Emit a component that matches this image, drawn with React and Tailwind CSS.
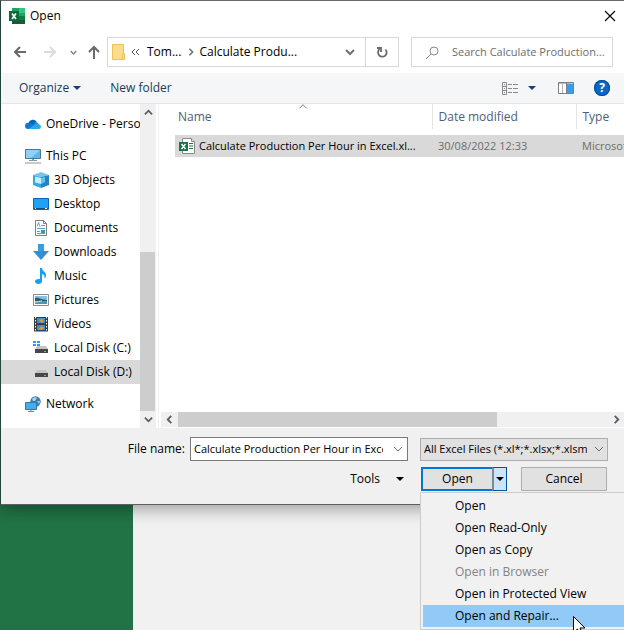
import React, { useState } from 'react';

const ExcelAppIcon = () => (
  <svg width="16" height="16" viewBox="0 0 16 16" className="shrink-0">
    <path d="M3 0h13v16H3z" fill="#21a366" />
    <path d="M10 0h6v5h-6z" fill="#33c481" />
    <path d="M3 5h7v5H3z" fill="#107c41" />
    <path d="M3 11h13v5H3z" fill="#185c37" />
    <path d="M10 8h6v4h-6z" fill="#107c41" />
    <path d="M0 3h10v10H0z" fill="#0b6a3c" />
    <path d="M3 5.5l4 5.5M7 5.5L3 11" stroke="#fff" strokeWidth="1.6" />
  </svg>
);

const ExcelFileIcon = () => (
  <svg width="16" height="16" viewBox="0 0 16 16" className="shrink-0">
    <path d="M3.5.5h9l3 3v12h-12z" fill="#fff" stroke="#8a8a8a" />
    <path d="M12.5.5v3h3" fill="#e8e8e8" stroke="#8a8a8a" />
    <path d="M10 5.500h4M10 8h4M10 10.500h4" stroke="#1e7145" />
    <path d="M0 4h9v9H0z" fill="#1e7145" />
    <path d="M2.500 6l4 5M6.500 6l-4 5" stroke="#fff" strokeWidth="1.400" />
  </svg>
);

const OneDriveIcon = () => (
  <svg width="16" height="16" viewBox="0 0 16 16">
    <path d="M3.500 7a4.500 4.500 0 0 1 8.300-1l-3 4z" fill="#0364b8" />
    <path d="M9 6.500a3.600 3.600 0 0 1 5 2.200l-4 3z" fill="#1490df" />
    <path d="M3 13a3 3 0 0 1 .300-6.200c1.400-.300 2.700 0 3.700.700L14 12z" fill="#0f78d4" />
    <path d="M3 13l7-4.500c3-1.500 6 .300 6 2.300A2.300 2.300 0 0 1 13.700 13z" fill="#28a8ea" />
  </svg>
);

const ThisPcIcon = () => (
  <svg width="16" height="16" viewBox="0 0 16 16">
    <path d="M.500 1.500h15v9H.500z" fill="#5cb8f0" stroke="#4a7796" />
    <path d="M1 2h14L6 10H1z" fill="#8fd0f7" />
    <path d="M7 11h2v1H7z" fill="#8a979e" />
    <path d="M4 12.500h8M0 15h16" stroke="#8a979e" />
  </svg>
);

const ObjectsIcon = () => (
  <svg width="16" height="16" viewBox="0 0 16 16">
    <path d="M0 3l8-3 8 3-8 2z" fill="#7cc4e6" />
    <path d="M0 3l8 2v11l-8-3z" fill="#35a8e0" />
    <path d="M16 3L8 5v11l8-3z" fill="#2384c4" />
    <path d="M2 4.500l6 1.500v6l-6-1.500z" fill="#c4edfb" />
    <path d="M8 6l4-1v5l-4 2z" fill="#65c3ea" />
  </svg>
);

const DesktopIcon = () => (
  <svg width="16" height="16" viewBox="0 0 16 16">
    <path d="M.500 2.500h15v11H.500z" fill="#1ea2f8" stroke="#0c66ad" />
    <path d="M1 12.500h14" stroke="#0c4f88" />
    <path d="M2 12.500h1M12 12.500h2" stroke="#fff" />
  </svg>
);

const DocumentsIcon = () => (
  <svg width="16" height="16" viewBox="0 0 16 16">
    <path d="M2.500.500h8l3 3v12h-11z" fill="#fff" stroke="#7f7f7f" />
    <path d="M10.500.500v3h3" fill="none" stroke="#7f7f7f" />
    <path d="M4 6.500l1.500-4L7 6.500M8 5.500h4M4 8.500h8M4 13.500h8M4 11.500h3" fill="none" stroke="#58a3ce" />
    <path d="M8 10h4v3H8z" fill="#3b97a8" />
  </svg>
);

const DownloadsIcon = () => (
  <svg width="16" height="16" viewBox="0 0 16 16">
    <path d="M5 0h6v7h5l-8 9-8-9h5z" fill="#2f8fdc" />
    <path d="M5 0h6v7H5z" fill="#3a9ae3" />
  </svg>
);

const MusicIcon = () => (
  <svg width="16" height="16" viewBox="0 0 16 16">
    <path d="M7 0h2c0 3 4 4 4 7 0 1.500-.500 3-1.500 3.500C12 8 11 6.500 9 6v7c0 2-1.500 3-3.500 3S2 15 2 13.500 3.500 11 5.500 11H7z" fill="#1d9df2" />
  </svg>
);

const PicturesIcon = () => (
  <svg width="16" height="16" viewBox="0 0 16 16">
    <path d="M.500 2.500h15v11H.500z" fill="#fff" stroke="#8d8d8d" />
    <path d="M2 4h12v8H2z" fill="#7cc3ec" />
    <path d="M2 6c4-1 6 2 12 2v1H2z" fill="#2d5d5b" />
    <path d="M2 9h12v3H2z" fill="#4c94b6" />
    <path d="M2 10c3 0 4-1 7-1" stroke="#d8eef8" fill="none" />
  </svg>
);

const VideosIcon = () => (
  <svg width="16" height="16" viewBox="0 0 16 16">
    <path d="M1 1h14v14.500H1z" fill="#3a3a3a" />
    <path d="M2.500 1v15M13.500 1v15" stroke="#fff" strokeDasharray="1.500 1.500" />
    <path d="M4 2h8v6H4zM4 9h8v6H4z" fill="#3e91cf" />
    <path d="M6 4l3-1 2 2-2 2zM5 13l4-3 2 2-2 2z" fill="#d49a3c" />
    <path d="M4 7h8v1H4zM4 14h8v1H4z" fill="#1d4b80" />
  </svg>
);

const DiskIcon = ({ system }) => (
  <svg width="16" height="16" viewBox="0 0 16 16">
    <path d="M4 6h9l2 3H2z" fill="#c4c4c4" />
    <path d="M2 9h13v4H2z" fill="#474747" />
    <path d="M11 11h2v1h-2z" fill="#3fd67a" />
    {system && <path d="M0 1h3v2H0zM4 1h3v2H4zM0 4h3v2H0zM4 4h3v2H4z" fill="#1ea2f8" />}
  </svg>
);

const NetworkIcon = () => (
  <svg width="16" height="16" viewBox="0 0 16 16">
    <circle cx="10.500" cy="5.500" r="5.200" fill="#3c7fae" />
    <path d="M7 3c2-2 4-2 5-1l-2 3H8zM12 5l3 0-1 3z" fill="#a6d3ec" />
    <path d="M.500 6.500h11v7H.500z" fill="#45aeea" stroke="#2f78a8" />
    <path d="M3 15.500h6M6 14v1" stroke="#70899a" />
  </svg>
);

const Chevron = ({ dir = 'down', size = 10, color = '#5d5a66', width = 2 }) => {
  const paths = {
    down: 'M1 3l4 4 4-4',
    up: 'M1 7l4-4 4 4',
    left: 'M7 1L3 5l4 4',
    right: 'M3 1l4 4-4 4',
  };
  return (
    <svg width={size} height={size} viewBox="0 0 10 10" className="shrink-0" fill="none">
      <path d={paths[dir]} stroke={color} strokeWidth={width} />
    </svg>
  );
};

const Caret = ({ color = '#000' }) => (
  <svg width="8" height="4" viewBox="0 0 8 4" className="shrink-0">
    <path d="M0 0h8L4 4z" fill={color} />
  </svg>
);

const places = [
  { name: 'OneDrive - Personal', icon: <OneDriveIcon />, root: true },
  { name: 'This PC', icon: <ThisPcIcon />, root: true },
  { name: '3D Objects', icon: <ObjectsIcon /> },
  { name: 'Desktop', icon: <DesktopIcon /> },
  { name: 'Documents', icon: <DocumentsIcon /> },
  { name: 'Downloads', icon: <DownloadsIcon /> },
  { name: 'Music', icon: <MusicIcon /> },
  { name: 'Pictures', icon: <PicturesIcon /> },
  { name: 'Videos', icon: <VideosIcon /> },
  { name: 'Local Disk (C:)', icon: <DiskIcon system /> },
  { name: 'Local Disk (D:)', icon: <DiskIcon /> },
  { name: 'Network', icon: <NetworkIcon />, root: true },
];

const menuItems = [
  { name: 'Open' },
  { name: 'Open Read-Only' },
  { name: 'Open as Copy' },
  { name: 'Open in Browser', disabled: true },
  { name: 'Open in Protected View' },
  { name: 'Open and Repair...' },
];

const TitleBar = () => (
  <header className="flex h-[30px] items-center pl-2 pr-1">
    <ExcelAppIcon />
    <h1 className="ml-[5px] flex-1">Open</h1>
    <button type="button" aria-label="Close" className="flex h-5 w-5 items-center justify-center">
      <svg width="12" height="12" viewBox="0 0 12 12" stroke="#000" strokeWidth="1.100">
        <path d="M1 1l10 10M11 1L1 11" />
      </svg>
    </button>
  </header>
);

const NavBar = () => (
  <nav className="flex h-[42px] items-center pl-[13px] pr-[11px]">
    <button type="button" aria-label="Back">
      <svg width="12" height="12" viewBox="0 0 12 12" fill="none" stroke="#6a6a6a" strokeWidth="2">
        <path d="M12 6H1M6 1L1 6l5 5" />
      </svg>
    </button>
    <button type="button" aria-label="Forward" disabled className="ml-[18px]">
      <svg width="12" height="12" viewBox="0 0 12 12" fill="none" stroke="#dcdcdc" strokeWidth="2">
        <path d="M0 6h11M6 1l5 5-5 5" />
      </svg>
    </button>
    <button type="button" aria-label="Recent locations" className="ml-[14px]">
      <Chevron size={7} color="#808080" width={2} />
    </button>
    <button type="button" aria-label="Up" className="ml-[11px]">
      <svg width="12" height="14" viewBox="0 0 12 14" fill="none" stroke="#6a6a6a" strokeWidth="2">
        <path d="M6 14V2M1 7l5-5 5 5" />
      </svg>
    </button>

    {/* Address bar */}
    <div className="ml-[7px] flex h-[30px] min-w-0 flex-1 items-center border border-[#d9d9d9] pl-1">
      <svg width="14" height="16" viewBox="0 0 14 16" className="shrink-0">
        <path d="M.500.500h11v15H.500z" fill="#fbdc8d" stroke="#eac25a" />
        <path d="M10.500 9.500h2v6h-2z" fill="#fbdc8d" stroke="#eac25a" />
      </svg>
      <svg width="9" height="8" viewBox="0 0 9 8" className="ml-[5px] shrink-0" fill="none" stroke="#555">
        <path d="M4 1L1 4l3 3M8 1L5 4l3 3" />
      </svg>
      <a href="#tom" className="ml-[7px] whitespace-nowrap">Tom...</a>
      <span className="ml-[6px]"><Chevron dir="right" size={8} color="#707070" /></span>
      <a href="#folder" className="ml-1 flex-1 truncate">Calculate Produ...</a>
      <button type="button" aria-label="Previous locations" className="px-[10px]">
        <Chevron color="#707070" />
      </button>
      <button
        type="button"
        aria-label="Refresh"
        className="flex h-full w-[33px] items-center justify-center border-l border-[#d9d9d9]"
      >
        <svg width="12" height="12" viewBox="0 0 12 12" fill="none" stroke="#6a6a6a" strokeWidth="1.800">
          <path d="M9.500 3.500a4.300 4.300 0 1 1-6 -.300M1 2h4v4" />
        </svg>
      </button>
    </div>

    {/* Search */}
    <label className="ml-3 flex h-[30px] w-[202px] items-center border border-[#d9d9d9] pl-[14px]">
      <svg width="13" height="13" viewBox="0 0 13 13" className="shrink-0" fill="none" stroke="#8a8a8a">
        <circle cx="8" cy="5" r="4" />
        <path d="M5 8l-5 5" />
      </svg>
      <input
        type="text"
        aria-label="Search"
        placeholder="Search Calculate Production..."
        className="ml-[13px] min-w-0 flex-1 text-[11px] outline-none placeholder:text-[#6d6d6d]"
      />
    </label>
  </nav>
);

const Toolbar = () => (
  <div className="flex h-[31px] items-center border-b border-[#e4e6e8] bg-[#f5f6f7] pl-[18px] pr-[14px] text-[#1e395b]">
    <button type="button" className="flex items-center gap-1">
      Organize <Caret color="#1e3a78" />
    </button>
    <button type="button" className="ml-[29px]">New folder</button>
    <button type="button" aria-label="Change your view" className="ml-auto flex items-center gap-[10px]">
      <svg width="16" height="13" viewBox="0 0 16 13" fill="none" stroke="#8a8a8a">
        <path d="M.500.500h4v12h-4zM.500 4.500h4M.500 8.500h4M2 2.500h1M2 6.500h1M2 10.500h1" />
        <path d="M6 2.500h4M11 2.500h5M6 6.500h4M11 6.500h5M6 10.500h4M11 10.500h5" />
      </svg>
      <Caret color="#1e3a78" />
    </button>
    <button type="button" aria-label="Show the preview pane" className="ml-[22px]">
      <svg width="16" height="12" viewBox="0 0 16 12">
        <path d="M.500.500h15v11H.500z" fill="#fff" stroke="#7f7f7f" />
        <path d="M1 1h14" stroke="#7f7f7f" />
        <path d="M4.500 1v10" stroke="#b5b5b5" />
        <path d="M9 2h6v9H9z" fill="#3c9be8" />
        <path d="M8.500 1v10" stroke="#7f7f7f" />
      </svg>
    </button>
    <button
      type="button"
      aria-label="Help"
      className="ml-5 flex h-4 w-4 items-center justify-center rounded-full bg-[#0a66c8] font-bold text-white ring-1 ring-[#084a94] ring-inset"
    >
      ?
    </button>
  </div>
);

const Sidebar = ({ current, onSelect }) => (
  <aside className="flex w-[158px] shrink-0 border-r border-[#f0f0f0]">
    <ul className="min-w-0 flex-1 overflow-hidden pb-3 pt-2">
      {places.map((place) => (
        <li key={place.name} className={place.name === 'OneDrive - Personal' ? 'mb-2' : place.name === 'Network' ? 'mt-2' : ''}>
          <button
            type="button"
            onClick={() => onSelect(place.name)}
            className={`flex h-6 w-full items-center gap-[5px] overflow-hidden whitespace-nowrap ${
              place.root ? 'pl-6' : 'pl-8'
            } ${place.name === current ? 'bg-[#d9d9d9]' : ''}`}
          >
            <span className="shrink-0">{place.icon}</span>
            {place.name}
          </button>
        </li>
      ))}
    </ul>
    <div className="mr-[2px] flex w-4 flex-col bg-[#f0f0f0]">
      <div className="flex h-[17px] items-center justify-center"><Chevron dir="up" size={9} /></div>
      <div className="flex-1" />
      <div className="h-[159px] w-[15px] bg-[#cdcdcd]" />
      <div className="flex h-[17px] items-center justify-center"><Chevron size={9} /></div>
    </div>
  </aside>
);

const FileList = () => (
  <section className="flex min-w-0 flex-1 flex-col pl-[2px]">
    <table className="ml-[14px] w-[calc(100%-14px)] table-fixed border-collapse text-left">
      <thead>
        <tr className="h-[25px] text-[#4c607a]">
          <th className="relative border-r border-[#e5e5e5] pl-[3px] font-normal">
            Name
            <span className="absolute -top-[2px] left-1/2 -translate-x-1/2"><Chevron dir="up" size={9} color="#707070" width={1} /></span>
          </th>
          <th className="w-36 border-r border-[#e5e5e5] pl-[6px] font-normal">Date modified</th>
          <th className="w-12 pl-[6px] font-normal">Type</th>
        </tr>
      </thead>
      <tbody>
        <tr className="h-[6px]" />
        <tr className="h-[22px] bg-[#d9d9d9] text-[11px] text-[#6d6d6d]">
          <td className="pl-1 text-black">
            <span className="flex items-center gap-1 whitespace-nowrap">
              <ExcelFileIcon /> Calculate Production Per Hour in Excel.xl...
            </span>
          </td>
          <td className="pl-[6px]">30/08/2022 12:33</td>
          <td className="overflow-hidden whitespace-nowrap pl-[6px]">Microsoft Excel Worksheet</td>
        </tr>
      </tbody>
    </table>
    <div className="mt-auto mb-px flex h-[15px] items-center bg-[#f0f0f0]">
      <div className="flex w-[17px] justify-center"><Chevron dir="left" size={9} /></div>
      <div className="h-full w-[319px] bg-[#cdcdcd]" />
      <div className="flex flex-1 justify-end pr-[3px]"><Chevron dir="right" size={9} /></div>
    </div>
  </section>
);

const OpenMenu = () => (
  <div
    role="menu"
    className="absolute top-[25px] left-[-1px] z-10 w-[210px] border border-[#cccccc] bg-[#f1f1f1] py-[2px] pl-[2px]"
  >
    {menuItems.map((item, index) => (
      <button
        key={item.name}
        type="button"
        role="menuitem"
        disabled={item.disabled}
        className={`block h-[22px] w-full pl-8 text-left ${item.disabled ? 'text-[#838383]' : ''} ${
          index === menuItems.length - 1 ? 'bg-[#91c9f7]' : ''
        }`}
      >
        {item.name}
      </button>
    ))}
    <svg width="13" height="20" viewBox="0 0 13 20" className="absolute top-[123px] left-[152px]">
      <path d="M.500.500v16l4-3.500 2.500 6 2.500-1-2.500-6h5z" fill="#fff" stroke="#000" />
    </svg>
  </div>
);

const Footer = () => {
  const [fileName, setFileName] = useState('Calculate Production Per Hour in Excel.xlsx');

  return (
    <footer className="bg-[#f0f0f0] pt-[9px] pr-4 pb-[13px]">
      <div className="flex items-center">
        <label htmlFor="file-name" className="w-[184px] text-right">File name:</label>
        <div className="ml-[5px] flex h-6 min-w-0 flex-1 items-center border border-[#7a7a7a] bg-white pr-1 pl-[3px]">
          <input
            id="file-name"
            type="text"
            value={fileName}
            onChange={(e) => setFileName(e.target.value)}
            className="mr-[10px] min-w-0 flex-1 text-[11px] outline-none"
          />
          <Chevron color="#6a6a6a" width={1} />
        </div>
        <div className="relative ml-3 flex h-6 w-[188px] items-center">
          <select
            aria-label="File type"
            className="h-[23px] w-full appearance-none border border-[#adadad] bg-[#e1e1e1] pr-[20px] pl-[3px] text-[11px] outline-none"
          >
            <option>All Excel Files (*.xl*;*.xlsx;*.xlsm;*.xlsb)</option>
          </select>
          <span className="pointer-events-none absolute right-1"><Chevron color="#6a6a6a" width={1} /></span>
        </div>
      </div>

      <div className="mt-[6px] flex h-6 items-center justify-end pr-px">
        <button type="button" className="mr-[17px] flex items-center gap-4">
          Tools <Caret />
        </button>
        <div className="relative flex h-6 w-[86px]">
          <button type="button" className="flex-1 border-2 border-r-0 border-[#0078d7] bg-[#e1e1e1]">
            Open
          </button>
          <button
            type="button"
            aria-label="More open options"
            className="flex w-[15px] items-center justify-center border border-l-2 border-[#005499] border-l-[#7a8a94] bg-[#cce4f7]"
          >
            <Caret />
          </button>
          <OpenMenu />
        </div>
        <button type="button" className="ml-[14px] h-6 w-[86px] border border-[#adadad] bg-[#e1e1e1]">
          Cancel
        </button>
      </div>
    </footer>
  );
};

const App = () => {
  const [place, setPlace] = useState('Local Disk (D:)');

  return (
    <div className="flex h-screen flex-col overflow-hidden font-['Open_Sans','Noto_Sans',sans-serif] text-[12px] leading-4 text-black">
      <main className="relative z-10 border-t border-b border-l border-t-[#6b6b6b] border-b-[#5f5f5f] border-l-[#26453a] bg-white shadow-[0_4px_16px_rgba(0,0,0,0.35)]">
        <TitleBar />
        <NavBar />
        <Toolbar />
        <div className="flex">
          <Sidebar current={place} onSelect={setPlace} />
          <FileList />
        </div>
        <Footer />
      </main>

      {/* Excel window behind the dialog */}
      <div className="flex flex-1">
        <div className="w-[133px] bg-[#217346]" />
        <div className="flex-1 bg-[#f1f1f1]" />
      </div>
    </div>
  );
};

export default App;
